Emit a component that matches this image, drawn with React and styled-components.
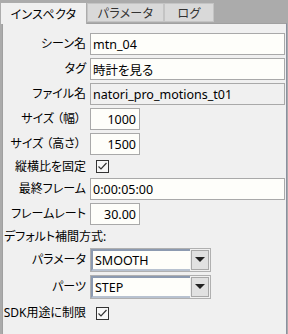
import styled, { createGlobalStyle } from "styled-components";

const GlobalStyle = createGlobalStyle`
  html, body {
    margin: 0;
    padding: 0;
    background: #ababab;
  }
  body {
    font-family: "Noto Sans", "Noto Sans CJK JP", sans-serif;
    font-size: 12px;
    font-feature-settings: "palt";
    color: #000;
  }
`;

const Window = styled.div`
  width: 288px;
  height: 334px;
  background: #ababab;
  display: flex;
  flex-direction: column;
  overflow: hidden;
`;

const TabBar = styled.div`
  display: flex;
  align-items: flex-end;
  height: 23px;
  flex-shrink: 0;
`;

const Tab = styled.div`
  box-sizing: border-box;
  width: ${(p) => p.w}px;
  height: ${(p) => (p.active ? 22 : 19)}px;
  margin-bottom: ${(p) => (p.active ? -1 : 1)}px;
  display: flex;
  align-items: center;
  justify-content: center;
  background: ${(p) => (p.active ? "#f0f0f0" : "#d9d9d9")};
  border: 1px solid ${(p) => (p.active ? "#acacac" : "#c4c4c4")};
  border-bottom: ${(p) => (p.active ? "none" : "1px solid #c4c4c4")};
  color: ${(p) => (p.active ? "#000" : "#333")};
  position: relative;
  z-index: ${(p) => (p.active ? 1 : 0)};
  padding-top: ${(p) => (p.active ? 0 : 1)}px;
  letter-spacing: 0.3px;
`;

const Panel = styled.div`
  flex: 1;
  margin: 0 1px 0 2px;
  background: #f0f0f0;
  border: 1px solid #a0a0a0;
  border-right-color: #8a90a0;
  border-bottom: none;
  padding: 9px 1px 0 0;
  display: flex;
  flex-direction: column;
  gap: 3px;
`;

const Row = styled.div`
  display: grid;
  grid-template-columns: 83px 1fr;
  column-gap: 4px;
  align-items: center;
  min-height: ${(p) => p.h || 22}px;
`;

const Label = styled.div`
  text-align: right;
  white-space: nowrap;
  line-height: 16px;
`;

const OpenParen = styled.span`
  margin-left: 3px;
`;

const CloseParen = styled.span`
  margin-right: 5px;
`;

const SectionLabel = styled.div`
  padding-left: 1px;
  line-height: 16px;
  margin-top: 1px;
`;

const Field = styled.div`
  box-sizing: border-box;
  height: 22px;
  width: ${(p) => (p.narrow ? "50px" : "195px")};
  background: ${(p) => (p.readOnly ? "#f0f0f0" : "#fefefa")};
  border: 1px solid #a9a9a9;
  padding: 0 3px 0 2px;
  display: flex;
  align-items: center;
  justify-content: ${(p) => (p.narrow ? "flex-end" : "flex-start")};
  font-size: 12.5px;
  white-space: nowrap;
  overflow: hidden;
`;

const CheckBox = styled.div`
  box-sizing: border-box;
  width: 13px;
  height: 13px;
  margin-left: 6px;
  border: 1px solid #333;
  background: #f7f7f7;
  display: flex;
  align-items: center;
  justify-content: center;
`;

const Select = styled.div`
  box-sizing: border-box;
  width: 121px;
  height: 24px;
  border: 1px solid #b0b0b0;
  display: flex;
  background: #f0f0f0;
`;

const SelectValue = styled.div`
  flex: 1;
  box-sizing: border-box;
  background: #fefefa;
  border-top: 2px solid #8c9ab0;
  border-left: 2px solid #8c9ab0;
  border-bottom: 2px solid #b8c2d0;
  padding: 0 2px;
  display: flex;
  align-items: center;
  font-size: 12.5px;
`;

const SelectButton = styled.div`
  box-sizing: border-box;
  width: 18px;
  margin: 1px;
  background: #e1e1e1;
  border: 1px solid #a8a8a8;
  display: flex;
  align-items: center;
  justify-content: center;
`;

function Check() {
  return (
    <CheckBox>
      <svg width="11" height="11" viewBox="0 0 11 11">
        <path d="M1.5 5.5 L4 8 L9.5 2" fill="none" stroke="#333" strokeWidth="1.2" />
      </svg>
    </CheckBox>
  );
}

function Dropdown({ value }) {
  return (
    <Select>
      <SelectValue>{value}</SelectValue>
      <SelectButton>
        <svg width="10" height="6" viewBox="0 0 10 6">
          <path d="M0 0 H10 L5 5 Z" fill="#222" />
        </svg>
      </SelectButton>
    </Select>
  );
}

export default function App() {
  return (
    <>
      <GlobalStyle />
      <Window>
        <TabBar>
          <Tab active w={87}>インスペクタ</Tab>
          <Tab w={77}>パラメータ</Tab>
          <Tab w={50}>ログ</Tab>
        </TabBar>
        <Panel>
          <Row>
            <Label>シーン名</Label>
            <Field>mtn_04</Field>
          </Row>
          <Row>
            <Label>タグ</Label>
            <Field>時計を見る</Field>
          </Row>
          <Row>
            <Label>ファイル名</Label>
            <Field readOnly>natori_pro_motions_t01</Field>
          </Row>
          <Row>
            <Label>
              サイズ<OpenParen>（</OpenParen>幅<CloseParen>）</CloseParen>
            </Label>
            <Field narrow>1000</Field>
          </Row>
          <Row>
            <Label>
              サイズ<OpenParen>（</OpenParen>高さ<CloseParen>）</CloseParen>
            </Label>
            <Field narrow>1500</Field>
          </Row>
          <Row h={17}>
            <Label>縦横比を固定</Label>
            <Check />
          </Row>
          <Row>
            <Label>最終フレーム</Label>
            <Field>0:00:05:00</Field>
          </Row>
          <Row>
            <Label>フレームレート</Label>
            <Field narrow>30.00</Field>
          </Row>
          <SectionLabel>デフォルト補間方式:</SectionLabel>
          <Row h={24}>
            <Label>パラメータ</Label>
            <Dropdown value="SMOOTH" />
          </Row>
          <Row h={24}>
            <Label>パーツ</Label>
            <Dropdown value="STEP" />
          </Row>
          <Row h={22}>
            <Label>SDK用途に制限</Label>
            <Check />
          </Row>
        </Panel>
      </Window>
    </>
  );
}
